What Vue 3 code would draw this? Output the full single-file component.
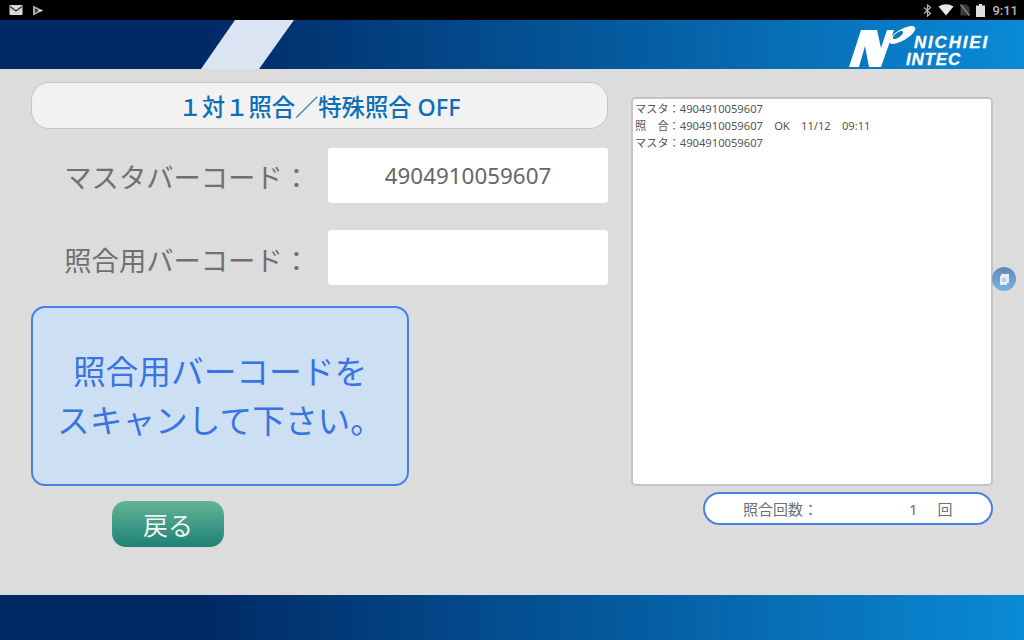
<template>
  <div class="screen">
    <!-- Android status bar -->
    <div class="status-bar">
      <div class="status-left">
        <svg class="ic" width="14" height="10" viewBox="0 0 14 10"><rect x="0.500" y="0" width="13" height="10" rx="1" fill="#d8d8d8" /><path d="M1 1.500 L7 6 L13 1.500" fill="none" stroke="#333" stroke-width="1.300" /></svg>
        <svg class="ic" width="12" height="11" viewBox="0 0 12 11"><path d="M1 0.500 L11 5.500 L1 10.500 Z" fill="#a8a8a8" /><path d="M3 3.200 L6.500 5.500 L3 7.800 Z" fill="#333" /><path d="M7 4 L11 5.500 L7 7 Z" fill="#e0e0e0" /></svg>
      </div>
      <div class="status-right">
        <svg width="9" height="13" viewBox="0 0 9 13"><path d="M1 3.500 L7.500 9.500 L4.500 12 L4.500 1 L7.500 3.500 L1 9.500" fill="none" stroke="#b8b8b8" stroke-width="1.200" /></svg>
        <svg width="16" height="12" viewBox="0 0 16 12"><path d="M0.500 2.500 Q8 -2 15.500 2.500 L8 11.500 Z" fill="#e8e8e8" /></svg>
        <svg width="10" height="12" viewBox="0 0 10 12"><path d="M0.500 0.500 H6.500 L9.500 3.500 V11.500 H0.500 Z" fill="#3c3c3c" /><path d="M0.500 0.500 L9.500 11.500" stroke="#8a8a8a" stroke-width="1.200" /></svg>
        <svg width="9" height="13" viewBox="0 0 9 13"><path d="M3 0 H6 V1.500 H9 V13 H0 V1.500 H3 Z" fill="#dedede" /></svg>
        <span class="clock">9:11</span>
      </div>
    </div>

    <!-- Header -->
    <header class="top-band">
      <div class="stripe"></div>
      <div class="logo">
        <svg class="logo-mark" width="68" height="40" viewBox="0 0 68 40">
          <path d="M13 3 H29 L33 21 L39 3 H46 L33 40 H21 L17 19 L11 40 H1 Z" fill="#fff" />
          <ellipse cx="54" cy="8" rx="15" ry="5.500" fill="#fff" transform="rotate(-30 54 8)" />
          <ellipse cx="50" cy="8" rx="6" ry="2.500" fill="#0a78c4" transform="rotate(-35 50 8)" />
        </svg>
        <div class="logo-text">
          <span class="logo-line1">NICHIEI</span>
          <span class="logo-line2">INTEC</span>
        </div>
      </div>
    </header>

    <!-- Main -->
    <main class="content">
      <section class="left">
        <div class="title-pill">１対１照合／特殊照合 OFF</div>

        <div class="field first">
          <label>マスタバーコード：</label>
          <div class="input">4904910059607</div>
        </div>
        <div class="field second">
          <label>照合用バーコード：</label>
          <div class="input"></div>
        </div>

        <div class="message">
          <span>照合用バーコードを</span>
          <span>スキャンして下さい。</span>
        </div>

        <button class="back-btn">戻る</button>
      </section>

      <section class="right">
        <div class="log">
          <div v-for="(line, i) in logLines" :key="i">{{ line }}</div>
        </div>
        <div class="counter">
          <span class="counter-label">照合回数：</span>
          <span class="counter-value">1</span>
          <span class="counter-unit">回</span>
        </div>
      </section>

      <!-- floating overlay button -->
      <div class="float-btn">
        <svg width="12" height="13" viewBox="0 0 12 13"><path d="M3 1 H11 V10 H9 V12 H2 V3 H3 Z" fill="#e4edf8" /><path d="M4 6 H8 M4 8 H8" stroke="#7fa8d8" stroke-width="1" /></svg>
      </div>
    </main>

    <footer class="bottom-band"></footer>
  </div>
</template>

<script setup>
const logLines = [
  'マスタ：4904910059607',
  '照　合：4904910059607　OK　11/12　09:11',
  'マスタ：4904910059607'
];
</script>

<style>
html, body {
  margin: 0;
  padding: 0;
  background: #dcdcdc;
}
</style>

<style scoped>
.screen {
  width: 1024px;
  height: 640px;
  display: flex;
  flex-direction: column;
  overflow: hidden;
  background: #dcdcdc;
  font-family: "Noto Sans", "Noto Sans CJK JP", sans-serif;
}

.status-bar {
  height: 20px;
  flex: none;
  background: #000;
  display: flex;
  align-items: center;
  justify-content: space-between;
  padding: 0 6px 0 9px;
}
.status-left,
.status-right {
  display: flex;
  align-items: center;
}
.status-left { gap: 9px; }
.status-right { gap: 6px; }
.clock {
  color: #b8b8b8;
  font-family: "Roboto", sans-serif;
  font-size: 13px;
  font-weight: 500;
  margin-left: 1px;
}

.top-band {
  position: relative;
  height: 49px;
  flex: none;
  background: linear-gradient(90deg, #002a66 0%, #002a66 20%, #0a8ad6 100%);
}
.stripe {
  position: absolute;
  left: 201px;
  top: 0;
  width: 93px;
  height: 49px;
  background: #dbe4f3;
  clip-path: polygon(34px 0, 93px 0, 58px 100%, 0 100%);
}
.logo {
  position: absolute;
  left: 848px;
  top: 7px;
  display: flex;
}
.logo-mark { overflow: visible; }
.logo-text {
  display: flex;
  flex-direction: column;
  color: #fff;
  font-family: "Liberation Sans", sans-serif;
  font-style: italic;
  font-weight: 700;
  line-height: 17px;
  letter-spacing: 1.800px;
  font-size: 17px;
  -webkit-text-stroke: 0.3px #fff;
}
.logo-line1 { margin: 7px 0 0 -2px; }
.logo-line2 { margin: 0 0 0 -10px; letter-spacing: 0.800px; }

.content {
  position: relative;
  flex: 1;
  display: flex;
  padding: 13px 31px 0;
  gap: 23px;
}
.left {
  width: 577px;
  flex: none;
  display: flex;
  flex-direction: column;
}
.title-pill {
  height: 45px;
  border: 1px solid #c4c4c4;
  border-radius: 18px;
  background: #f2f2f2;
  color: #0b6fb8;
  font-size: 23.300px;
  font-weight: 500;
  display: flex;
  align-items: center;
  justify-content: center;
}
.field {
  display: flex;
  align-items: center;
  justify-content: flex-end;
}
.field.first { margin-top: 19px; }
.field.second { margin-top: 27px; }
.field.second label { padding-top: 3px; }
.field label {
  color: #707070;
  font-size: 27.300px;
  margin-right: 18px;
  white-space: nowrap;
}
.input {
  width: 280px;
  height: 55px;
  background: #fff;
  border-radius: 3px;
  color: #666;
  font-size: 22.400px;
  display: flex;
  align-items: center;
  justify-content: center;
}
.message {
  width: 374px;
  height: 176px;
  margin-top: 21px;
  border: 2px solid #4a7fe6;
  border-radius: 14px;
  background: #cde0f3;
  color: #3a74e0;
  font-size: 32.700px;
  line-height: 49px;
  display: flex;
  flex-direction: column;
  align-items: center;
  justify-content: center;
}
.back-btn {
  width: 112px;
  height: 46px;
  margin: 15px 0 0 81px;
  padding: 0;
  border: none;
  border-radius: 14px;
  background: linear-gradient(180deg, #62b496 0%, #1f8276 100%);
  color: #f4f4f4;
  font-family: inherit;
  font-size: 25px;
}

.right {
  width: 362px;
  flex: none;
  display: flex;
  flex-direction: column;
  align-items: flex-end;
  padding-top: 15px;
}
.log {
  width: 100%;
  box-sizing: border-box;
  height: 389px;
  background: #fff;
  border: 2px solid #c4c4c4;
  border-radius: 5px;
  padding: 1px 2px;
  color: #555;
  font-size: 11.200px;
  line-height: 17px;
  white-space: nowrap;
}
.counter {
  width: 290px;
  height: 33px;
  box-sizing: border-box;
  margin-top: 6px;
  border: 2px solid #4a7fe6;
  border-radius: 17px;
  background: #fff;
  color: #707070;
  font-size: 15px;
  display: flex;
  align-items: center;
}
.counter-label { margin-left: 38px; }
.counter-value { margin-left: 91px; }
.counter-unit { margin-left: 20px; }

.float-btn {
  position: absolute;
  left: 992px;
  top: 198px;
  width: 24px;
  height: 24px;
  border-radius: 50%;
  background: linear-gradient(180deg, #5f87b8 0%, #78b4e6 100%);
  display: flex;
  align-items: center;
  justify-content: center;
}

.bottom-band {
  height: 45px;
  flex: none;
  background: linear-gradient(90deg, #002a66 0%, #002a66 20%, #0a8ad6 100%);
}
</style>
